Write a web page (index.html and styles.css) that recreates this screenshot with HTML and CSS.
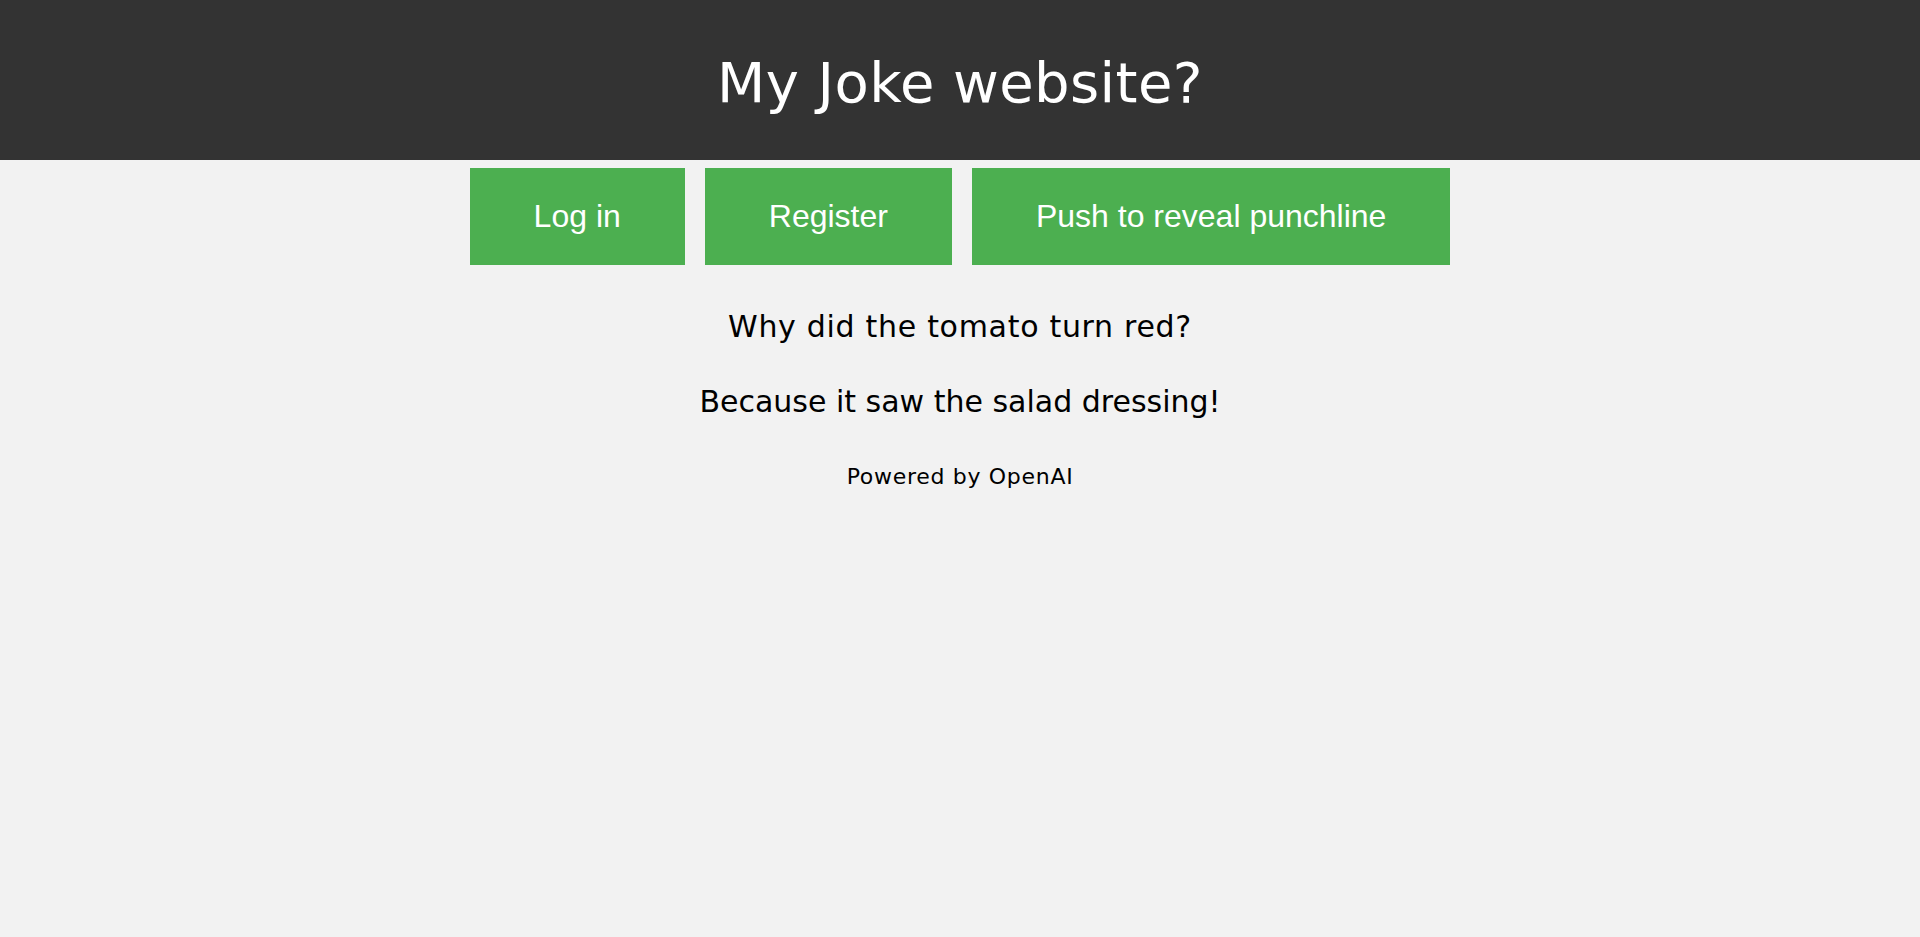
FILE: index.html
```html
<!DOCTYPE html>
<html lang="en">
<head>
<meta charset="utf-8">
<title>My Joke website?</title>
<link rel="stylesheet" href="styles.css">
</head>
<body>
<header class="site-header">
  <h1 class="site-title">My Joke website?</h1>
</header>
<nav class="actions">
  <button class="btn">Log in</button>
  <button class="btn">Register</button>
  <button class="btn">Push to reveal punchline</button>
</nav>
<main class="joke">
  <p class="joke-line setup">Why did the tomato turn red?</p>
  <p class="joke-line punchline">Because it saw the salad dressing!</p>
  <p class="credit">Powered by OpenAI</p>
</main>
</body>
</html>
```
FILE: styles.css
```css
html, body {
  margin: 0;
  padding: 0;
}
body {
  background: #f2f2f2;
  font-family: "DejaVu Sans", Lato, sans-serif;
  color: #000;
}
.site-header {
  background: #333333;
  height: 155px;
  padding-top: 5px;
  display: flex;
  align-items: center;
  justify-content: center;
}
.site-title {
  margin: 0;
  color: #fff;
  font-size: 56px;
  font-weight: 400;
  line-height: 56px;
  letter-spacing: 0.4px;
}
.actions {
  display: flex;
  justify-content: center;
  gap: 20px;
  margin-top: 8px;
}
.btn {
  background: #4caf50;
  color: #fff;
  border: none;
  font-family: "Liberation Sans", Arial, sans-serif;
  font-size: 32px;
  line-height: 37px;
  padding: 30px 64px;
  margin: 0;
  cursor: pointer;
}
.joke {
  text-align: center;
}
.joke-line {
  margin: 0;
  font-size: 30px;
  line-height: 36px;
}
.setup {
  margin-top: 44px;
  letter-spacing: 0.7px;
}
.punchline {
  margin-top: 39px;
}
.credit {
  margin: 44px 0 0;
  font-size: 22px;
  line-height: 26px;
  letter-spacing: 0.7px;
}
```
